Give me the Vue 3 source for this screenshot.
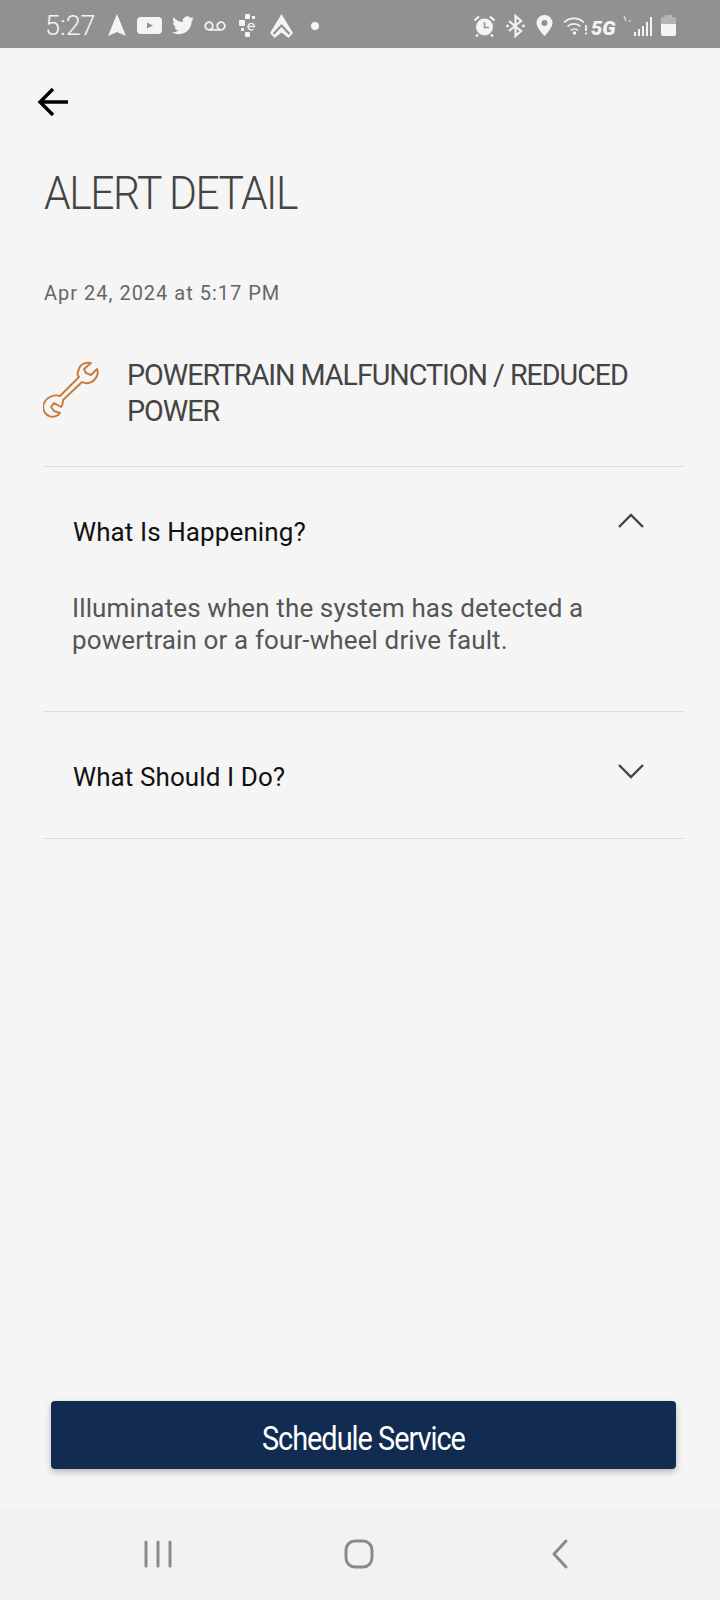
<script setup>
const sections = [
  {
    title: 'What Is Happening?',
    open: true,
    body: 'Illuminates when the system has detected a powertrain or a four-wheel drive fault.'
  },
  { title: 'What Should I Do?', open: false, body: '' }
]
</script>

<template>
  <div class="screen">
    <header class="status-bar">
      <span class="clock">5:27</span>
      <div class="status-left">
        <svg width="18" height="23" viewBox="0 0 18 23"><path d="M9 0 L18 22 L9 18 L0 22 Z" fill="#f4f4f4"/></svg>
        <svg class="ml11" width="25" height="17" viewBox="0 0 25 17"><rect width="25" height="17" rx="4" fill="#f4f4f4"/><path d="M10 5.500 L16 8.500 L10 11.500 Z" fill="#919191"/></svg>
        <svg class="ml10" width="22" height="19" viewBox="0 0 24 20"><path d="M24 2.400c-.9.400-1.800.600-2.800.800 1-.6 1.800-1.500 2.200-2.700-1 .6-2 1-3.100 1.200A4.900 4.900 0 0 0 11.900 6.200C7.800 6 4.200 4 1.700.9c-1.300 2.300-.6 5.100 1.500 6.500-.8 0-1.500-.2-2.200-.6 0 2.400 1.700 4.400 3.900 4.900-.7.2-1.500.2-2.200.1.600 2 2.400 3.400 4.600 3.400A9.900 9.900 0 0 1 0 17.300 14 14 0 0 0 7.500 19.500c9.100 0 14.300-7.700 14-14.600 1-.7 1.800-1.500 2.500-2.500z" fill="#f4f4f4"/></svg>
        <svg class="ml10" width="22" height="10" viewBox="0 0 22 10"><circle cx="5" cy="5" r="3.800" fill="none" stroke="#f4f4f4" stroke-width="1.800"/><circle cx="17" cy="5" r="3.800" fill="none" stroke="#f4f4f4" stroke-width="1.800"/><path d="M5 8.800H17" stroke="#f4f4f4" stroke-width="1.800"/></svg>
        <svg class="ml13" width="18" height="23" viewBox="0 0 18 23"><g fill="#f4f4f4"><rect x="6" y="0" width="5" height="5" rx="1"/><rect x="13" y="2" width="3" height="3"/><rect x="0" y="6" width="6" height="6" rx="1"/><rect x="2" y="14" width="3" height="3"/><rect x="6" y="18" width="5" height="5" rx="1"/></g><path d="M9 12.500h6.500a3.300 3.300 0 1 0-1 2.600" fill="none" stroke="#f4f4f4" stroke-width="1.300"/></svg>
        <svg class="ml13" width="23" height="24" viewBox="0 0 23 24"><path d="M11.500 0 L23 19 L18.500 24 L11.500 18.500 L4.500 24 L0 19 Z" fill="#f4f4f4"/><path d="M3.500 20 L11.500 11.500 L19.500 20" fill="none" stroke="#919191" stroke-width="2"/></svg>
        <span class="dot"></span>
      </div>
      <div class="status-right">
        <svg width="23" height="22" viewBox="0 0 23 22"><circle cx="11.500" cy="12" r="8.500" fill="#f4f4f4"/><path d="M11.500 7V12.500H16" fill="none" stroke="#919191" stroke-width="1.500"/><path d="M1.500 5.500 L6 1.500M21.500 5.500 L17 1.500M5 19.500l-2 2M18 19.500l2 2" stroke="#f4f4f4" stroke-width="2.200"/></svg>
        <svg class="ml10" width="19" height="24" viewBox="0 0 19 24"><path d="M3 7 L15 17 L9.500 22 V2 L15 7 L3 17" fill="none" stroke="#f4f4f4" stroke-width="2.200"/><circle cx="1.500" cy="12" r="1.400" fill="#f4f4f4"/><circle cx="17.500" cy="12" r="1.400" fill="#f4f4f4"/></svg>
        <svg class="ml11" width="17" height="21" viewBox="0 0 17 21"><path d="M8.500 0a8 8 0 0 0-8 8c0 5 8 13 8 13s8-8 8-13a8 8 0 0 0-8-8zm0 11a3 3 0 1 1 0-6 3 3 0 0 1 0 6z" fill="#f4f4f4"/></svg>
        <svg class="ml10" width="26" height="19" viewBox="0 0 26 19"><g fill="none" stroke="#f4f4f4" stroke-width="1.600"><path d="M1 6.500C6.500 1 15.500 1 21 6.500"/><path d="M4.500 10.500c3.500-3.500 9.500-3.500 13 0"/><path d="M8 14.500c2-2 5-2 7 0"/></g><circle cx="11.500" cy="17" r="1.700" fill="#f4f4f4"/><path d="M23 9v6M23 16.500v2" stroke="#f4f4f4" stroke-width="1.800"/></svg>
        <span class="net">5G</span>
        <svg class="tick" width="8" height="6" viewBox="0 0 8 6"><path d="M1 0 L3 5M6 4.500l1.500 1" stroke="#e4e4e4" stroke-width="1.200"/></svg>
        <svg class="bars" width="19" height="19" viewBox="0 0 19 19"><g fill="#f4f4f4"><rect x="0" y="15" width="2" height="4"/><rect x="4" y="12" width="2" height="7"/><rect x="8" y="9" width="2" height="10"/><rect x="12" y="5" width="2" height="14"/><rect x="16" y="0" width="2" height="19"/></g></svg>
        <svg class="batt" width="15" height="21" viewBox="0 0 15 21"><path d="M4 0h7v2h2a2 2 0 0 1 2 2V19a2 2 0 0 1-2 2H2a2 2 0 0 1-2-2V4a2 2 0 0 1 2-2h2z" fill="#b4b4b4"/><path d="M0 9h15v10a2 2 0 0 1-2 2H2a2 2 0 0 1-2-2z" fill="#f4f4f4"/></svg>
      </div>
    </header>

    <main class="content">
      <button class="back" aria-label="Back">
        <svg width="32" height="30" viewBox="0 0 32 30"><path d="M31 15H3M16 2 L3 15 L16 28" fill="none" stroke="#000" stroke-width="3.400"/></svg>
      </button>

      <h1 class="title">ALERT DETAIL</h1>
      <p class="date">Apr 24, 2024 at 5:17 PM</p>

      <div class="alert-row">
        <svg class="wrench" width="57" height="57" viewBox="7 8 57 57">
          <path d="M55 10 C48 9 43 12 42 19 C41 21 42 23 43 24 L24 43 C18 41 11 44 8 50 C6 55 8 61 13 63 C17 65 22 63 24 60 L18 58 L15 54 L18 50 L25 54 C27 52 27 49 27 47 L46 29 C52 32 58 29 61 23 C62 20 62 18 61 16 L55 22 L50 20 L48 16 Z" fill="none" stroke="#c87a3c" stroke-width="1.900" stroke-linejoin="round"/>
        </svg>
        <h2 class="alert-name">POWERTRAIN MALFUNCTION / REDUCED POWER</h2>
      </div>

      <section v-for="s in sections" :key="s.title" class="panel" :class="{ open: s.open }">
        <div class="panel-head">
          <span class="panel-title">{{ s.title }}</span>
          <svg width="28" height="16" viewBox="0 0 28 16" class="chev">
            <path :d="s.open ? 'M2 14 L14 2 L26 14' : 'M2 2 L14 14 L26 2'" fill="none" stroke="#444" stroke-width="2.400"/>
          </svg>
        </div>
        <p v-if="s.open" class="panel-body">{{ s.body }}</p>
      </section>
    </main>

    <div class="cta-wrap">
      <button class="cta"><span>Schedule Service</span></button>
    </div>

    <nav class="nav-bar">
      <svg width="28" height="28" viewBox="0 0 28 28"><path d="M2 2V26M14 2V26M26 2V26" stroke="#8a8a8a" stroke-width="3" stroke-linecap="round"/></svg>
      <svg class="nav-home" width="30" height="30" viewBox="0 0 30 30"><rect x="2" y="2" width="26" height="26" rx="9" fill="none" stroke="#8a8a8a" stroke-width="3"/></svg>
      <svg class="nav-back" width="18" height="30" viewBox="0 0 18 30"><path d="M15 2 L3 15 L15 28" fill="none" stroke="#8a8a8a" stroke-width="3" stroke-linecap="round" stroke-linejoin="round"/></svg>
    </nav>
  </div>
</template>

<style>
html, body {
  margin: 0;
  background: #f5f5f5;
}
</style>

<style scoped>
.screen {
  width: 720px;
  height: 1600px;
  display: flex;
  flex-direction: column;
  background: #f5f5f5;
  font-family: Roboto, "Liberation Sans", sans-serif;
  overflow: hidden;
}

.status-bar {
  height: 48px;
  flex: none;
  display: flex;
  align-items: center;
  padding: 3px 44px 0 45px;
  box-sizing: border-box;
  background: #919191;
  color: #f4f4f4;
}
.clock {
  width: 63px;
  font-size: 27px;
  font-weight: 300;
}
.status-left,
.status-right {
  display: flex;
  align-items: center;
}
.status-right {
  margin-left: auto;
}
.ml10 { margin-left: 10px; }
.ml11 { margin-left: 11px; }
.ml13 { margin-left: 13px; }
.dot {
  width: 8px;
  height: 8px;
  border-radius: 50%;
  background: #f4f4f4;
  margin-left: 18px;
}
.net {
  width: 28px;
  margin: 5px 0 0 2px;
  font-size: 20px;
  line-height: 20px;
  font-weight: 900;
  font-style: italic;
}
.tick {
  margin: -14px 0 0 4px;
}
.bars {
  margin: 2px 0 0 3px;
}
.batt {
  margin-left: 8px;
}

.content {
  flex: 1;
  padding: 0 36px 0 43px;
}
.back {
  display: block;
  padding: 0;
  margin: 39px 0 0 -6px;
  border: 0;
  background: none;
  height: 30px;
}
.title {
  margin: 49px 0 0 1px;
  font-size: 46px;
  line-height: 54px;
  font-weight: 300;
  letter-spacing: -1.6px;
  color: #444;
  transform: scaleX(.927);
  transform-origin: left center;
}
.date {
  margin: 60px 0 0 1px;
  font-size: 20px;
  line-height: 26px;
  letter-spacing: 1px;
  color: #666;
}
.alert-row {
  display: flex;
  align-items: center;
  gap: 27px;
  margin-top: 51px;
  padding-bottom: 37px;
  border-bottom: 1px solid #dcdcdc;
}
.wrench {
  flex: none;
  margin-bottom: 8px;
}
.alert-name {
  flex: none;
  margin: 0;
  width: 550px;
  font-size: 30px;
  line-height: 36px;
  font-weight: 400;
  letter-spacing: -1.1px;
  color: #444;
  transform: scaleX(.957);
  transform-origin: left center;
}

.panel {
  border-bottom: 1px solid #dcdcdc;
  padding: 50px 39px 46px 30px;
}
.panel.open {
  padding-bottom: 55px;
}
.panel-head {
  display: flex;
  justify-content: space-between;
  align-items: flex-start;
}
.panel-title {
  font-size: 26px;
  line-height: 30px;
  letter-spacing: .1px;
  color: #111;
}
.chev {
  margin-top: 1px;
}
.open .chev {
  margin-top: -4px;
}
.panel-body {
  margin: 45px 0 0 -1px;
  font-size: 26px;
  line-height: 32px;
  letter-spacing: .12px;
  color: #555;
}

.cta-wrap {
  flex: none;
  padding: 0 44px 39px 51px;
}
.cta {
  display: block;
  width: 100%;
  height: 68px;
  padding: 5px 0 0;
  border: 0;
  border-radius: 4px;
  background: #122b50;
  box-shadow: 0 3px 6px rgba(0, 0, 0, .25);
  color: #fff;
  font-family: Roboto, sans-serif;
  font-size: 34px;
  letter-spacing: -1.2px;
}
.cta span {
  display: inline-block;
  transform: scaleX(.85);
}

.nav-bar {
  flex: none;
  height: 92px;
  box-sizing: border-box;
  display: flex;
  align-items: center;
  background: #f2f2f2;
  padding: 0 0 0 144px;
}
.nav-home {
  margin-left: 172px;
}
.nav-back {
  margin-left: 177px;
}
</style>
